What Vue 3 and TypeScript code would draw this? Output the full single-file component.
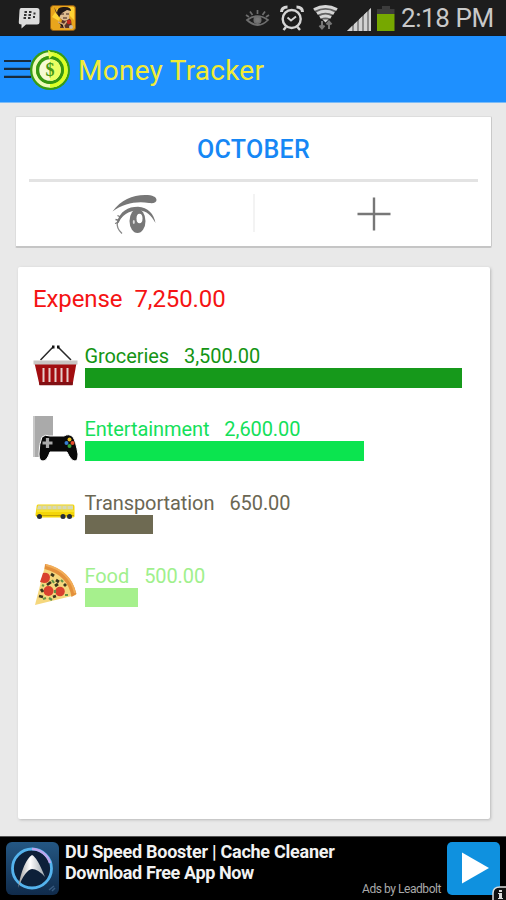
<script setup lang="ts">
interface Category {
  name: string
  amount: string
  icon: 'basket' | 'game' | 'bus' | 'pizza'
  color: string
  bar: string
  width: number
}

const categories: Category[] = [
  { name: 'Groceries', amount: '3,500.00', icon: 'basket', color: '#149414', bar: '#16991b', width: 377 },
  { name: 'Entertainment', amount: '2,600.00', icon: 'game', color: '#14e05a', bar: '#0be44f', width: 279 },
  { name: 'Transportation', amount: '650.00', icon: 'bus', color: '#6b6753', bar: '#6e6a52', width: 68 },
  { name: 'Food', amount: '500.00', icon: 'pizza', color: '#a0f08c', bar: '#a6f08d', width: 53 },
]
</script>

<template>
  <div class="screen">
    <div class="status">
      <svg class="status-left" width="90" height="36" viewBox="0 0 90 36">
        <path d="M21 8h16q2.500 0 2.500 2.500v11.500q0 2.500-2.500 2.500H26l-4.500 4v-4q-3 0-2.700-2.500l.7-11.500Q19.500 8 21 8z" fill="#dcdcdc" />
        <path d="M24.500 12h2.500M24 15h2.500M29 12h2.500M28.500 15h2.500M33.500 13.500h2M23.500 18h2.500M28 18h2.500M33 17h2" stroke="#333" stroke-width="1.900" />
        <rect x="50.500" y="5.500" width="25" height="25" rx="3" fill="#e9a51c" stroke="#8f5b12" />
        <path d="M52 17l6-9 4 5-3 8zM68 7h6v13l-4-4z" fill="#ffd333" />
        <path d="M54 7l2 6 6 7-2 8h12l-1-8-6-5-6 1z" fill="#573429" />
        <path d="M58 11q5-4 12-1l-1 9q-5 4-9-1z" fill="#dfbd91" />
        <path d="M57 13q0-7 8-6 6 0 6 4l-4-1-5 3-3 4z" fill="#211817" />
        <path d="M61 14h3M66 14h3M63 18h4" stroke="#3a211c" stroke-width="1.200" />
        <path d="M58 22l5 2 2 5M67 21l-3 4" stroke="#d0a87c" stroke-width="1.500" />
        <circle cx="69" cy="22" r="2.200" fill="#c3271c" />
        <circle cx="71" cy="27" r="2" fill="#c8bba8" />
      </svg>
      <svg class="status-right" width="156" height="36" viewBox="240 0 156 36">
        <g fill="none" stroke="#6e6e6e" stroke-width="1.700">
          <path d="M247 20q10-8 21 0q-10 10-21 0z" />
          <path d="M257.500 10v4M250 11.500l2.500 3.500M265 11.500l-2.500 3.500M246 15l3 2M269 15l-3 2" />
          <circle cx="257.500" cy="20" r="3.200" fill="#777" />
        </g>
        <g fill="none" stroke="#d5d5d5">
          <circle cx="291.700" cy="19" r="9" stroke-width="2.400" />
          <path d="M287.500 17.500l3.500 3 5-4" stroke-width="1.900" />
          <path d="M281.500 12q0-5 6-5M302.500 12q0-5-6-5" stroke-width="3" />
          <path d="M286 27l-2.500 3M297.500 27l2.500 3" stroke-width="2.500" />
        </g>
        <path d="M313 9q12-7 24.500 0L328 20h-5z" fill="#606060" />
        <g fill="none" stroke="#d5d5d5" stroke-width="3">
          <path d="M314 9.500q11.500-6 23 0M317 13.500q8.500-4.500 17 0M320 17.500q5.500-3 11 0" />
          <path d="M322.500 19.500h6l-3 3z" fill="#d5d5d5" stroke="none" />
        </g>
        <path d="M322 21v7m-2.500-2.500l2.500 3 2.500-3M329 29v-7m-2.500 2.500l2.500-3 2.500 3" stroke="#777" stroke-width="2" fill="none" />
        <path d="M347 31L371 8v23z" fill="#8b8b8b" />
        <path d="M347 31l5-5v5zM354 24.300l3-2.900V31h-3zM359 19.500l3-2.900V31h-3zM364 14.700l3-2.900V31h-3zM369 10l2-2v23h-2z" fill="#d2d2d2" />
        <path d="M377 14V9h5V6h8v3h4.500v5z" fill="#3c3c3c" />
        <path d="M377 14h17.500v17H377z" fill="#76a800" />
      </svg>
      <span class="time">2:18 PM</span>
    </div>

    <header class="appbar">
      <svg width="72" height="48" viewBox="0 0 72 48">
        <path d="M4 17h27M4 24.800h27M4 32.800h27" stroke="#182b3c" stroke-width="2.200" />
        <circle cx="50" cy="26" r="20" fill="#379c13" />
        <circle cx="50" cy="26" r="15.800" fill="none" stroke="#effcb9" stroke-width="3.800" />
        <path d="M50 10.200a15.800 15.800 0 0 1 0 31.600" fill="none" stroke="#dcff24" stroke-width="3.800" />
        <circle cx="50" cy="26" r="14" fill="#37970f" />
        <circle cx="50" cy="26" r="10.800" fill="#f5fad3" />
        <path d="M50 15.200a10.800 10.800 0 0 1 0 21.600z" fill="#eaff62" />
        <path d="M48 6l6 4.200-5 4.800z" fill="#e7ff4a" />
        <text x="50" y="32" class="dollar">$</text>
      </svg>
      <h1>Money Tracker</h1>
    </header>

    <main>
      <section class="month-card">
        <h2>OCTOBER</h2>
        <div class="actions">
          <div class="action view">
            <svg width="46" height="42" viewBox="0 0 46 42">
              <path d="M.5 17.500C9 6 20 1 33 1C41 1 44.500 3 44.500 6C44.500 8.500 42 9.500 37 9C24 7 12 9.500 .5 17.500z" fill="#777" />
              <path d="M4.500 29C8 17 16 12.700 26 12.700C36 13 42 20 43.500 29C39 21 35 17 27 16.500C17 16 10 21 6.500 29z" fill="#777" />
              <path d="M5.500 28Q4 34 10 39.500" stroke="#888" stroke-width="1.300" fill="none" />
              <path d="M3 29.500l3-1M3.500 25.500l4 1M5.500 21.500l4 2" stroke="#777" stroke-width="1.300" />
              <ellipse cx="25.500" cy="27" rx="8" ry="12" fill="#777" />
              <ellipse cx="27.500" cy="24.500" rx="3" ry="4.800" fill="#fff" />
              <ellipse cx="21.800" cy="28" rx="1" ry="2" fill="#ddd" />
            </svg>
          </div>
          <div class="action add">
            <svg width="34" height="34" viewBox="0 0 34 34">
              <path d="M17 .5v33M.5 17h33" stroke="#777" stroke-width="2.400" />
            </svg>
          </div>
        </div>
      </section>

      <section class="expense-card">
        <div class="total"><span>Expense</span><span>7,250.00</span></div>
        <ul>
          <li v-for="c in categories" :key="c.name">
            <svg v-if="c.icon === 'basket'" width="46" height="50" viewBox="0 0 46 50">
              <path d="M7.500 20L20 7M38 20L25 7" stroke="#292929" stroke-width="1.500" />
              <path d="M19 5.500h2.500v3H19zM24 5.500h2.500v3H24z" fill="#111" />
              <path d="M1.500 23h42l-4 22h-33z" fill="#a20d10" />
              <path d="M6 42h34l-.5 3.200h-33z" fill="#811014" />
              <path d="M.5 20.500h44v4H.500z" fill="#c9c5c3" />
              <path d="M10.500 28v14M16.500 28v14M22.500 28v14M28.500 28v14M34.500 28v14" stroke="#e5cdca" stroke-width="2" />
            </svg>
            <svg v-else-if="c.icon === 'game'" width="46" height="50" viewBox="0 0 46 50">
              <path d="M0 3h20v20L6 44H0z" fill="#aaa" />
              <path d="M0 3h2v41H0z" fill="#c8c8c8" />
              <path d="M9 24q3-3 8-1h14q5-3 9 1q3 5 5 17q0 7-3 7q-4 0-8-9H17q-3 9-7 9t-4-7q0-10 3-17z" fill="#090909" stroke="#fff" stroke-width="1" />
              <path d="M14.500 25v10M9.500 30h10" stroke="#aaa" stroke-width="3.200" />
              <circle cx="36.500" cy="26.500" r="2" fill="#e8be26" />
              <circle cx="39.500" cy="30" r="2" fill="#e54b2c" />
              <circle cx="36.500" cy="33" r="2" fill="#36a33b" />
              <circle cx="33.500" cy="30" r="2" fill="#367fd1" />
            </svg>
            <svg v-else-if="c.icon === 'bus'" width="46" height="50" viewBox="0 0 46 50">
              <path d="M5 17.500h35q1.500 0 1.500 2v10q0 1-2 1h-34q-3 0-3-3l1-7q0-3 1.500-3z" fill="#f4d609" />
              <path d="M5 18.500h35v4H4z" fill="#d5d8b7" />
              <path d="M9 18.500v4M14 18.500v4M19 18.500v4M24 18.500v4M29 18.500v4M34 18.500v4" stroke="#eedc59" />
              <path d="M4 24h37" stroke="#fff24a" />
              <path d="M3 28.500h38" stroke="#c7a500" />
              <circle cx="6.500" cy="29.500" r="2.500" fill="#242b3a" />
              <circle cx="30" cy="29.500" r="2.500" fill="#242b3a" />
              <circle cx="36.500" cy="29.500" r="2.500" fill="#242b3a" />
            </svg>
            <svg v-else width="46" height="50" viewBox="0 0 46 50">
              <path d="M12 6L2 45L43 35Q37 13 12 6z" fill="#f5d77d" />
              <path d="M12 4Q38 10 43.500 34L38.500 37Q35 15 11.500 9z" fill="#e3903c" />
              <path d="M13 5Q37 11 42 33" fill="none" stroke="#f2ad58" stroke-width="2" />
              <path d="M10 13q6-1 7 4 0 6-6 6l-4-1z" fill="#d9402e" />
              <circle cx="15.500" cy="31" r="5" fill="#d9402e" />
              <circle cx="27" cy="31.500" r="4.800" fill="#d9402e" />
              <path d="M18 14l3 2M23 20l3 2M14 25l4-3M6 36l4 1M22 26l3-2M8 29l2 3M31 24l2 2M20 37l3-1" stroke="#39351d" stroke-width="2.800" />
              <path d="M19 20l2 3M28 20l2 2M9 25l2 1M22 30v3M10 39l3-1M16 38l3 2M32 35l3 0" stroke="#639447" stroke-width="2.200" />
            </svg>
            <div class="detail">
              <div class="label" :style="{ color: c.color }"><span>{{ c.name }}</span><span>{{ c.amount }}</span></div>
              <div class="bar" :style="{ width: c.width + 'px', background: c.bar }"></div>
            </div>
          </li>
        </ul>
      </section>
    </main>

    <footer class="ad">
      <svg class="ad-logo" width="53" height="53" viewBox="0 0 53 53">
        <defs>
          <linearGradient id="tile" x2="0" y2="1"><stop stop-color="#245783" /><stop offset="1" stop-color="#102b4b" /></linearGradient>
          <linearGradient id="arrow" x2="1"><stop stop-color="#999" /><stop offset=".45" stop-color="#fff" /><stop offset="1" stop-color="#9ba4ab" /></linearGradient>
        </defs>
        <rect width="53" height="53" rx="6" fill="url(#tile)" />
        <circle cx="26" cy="26.500" r="19.500" fill="#0d2039" stroke="#54b3ed" stroke-width="2.800" />
        <path d="M26 7a19.500 19.500 0 0 1 18 14" fill="none" stroke="#bca7ed" stroke-width="2.600" />
        <path d="M26 13Q31 15 39 35Q32 27 26 27Q19 28 12 46Q17 19 26 13z" fill="url(#arrow)" />
        <path d="M43 48l5-4M46 49l3-3" stroke="#385b80" stroke-width="1.500" />
      </svg>
      <div class="ad-copy">
        <div class="ad-line">DU Speed Booster | Cache Cleaner</div>
        <div class="ad-line second">Download Free App Now</div>
        <div class="credit">Ads by Leadbolt</div>
      </div>
      <div class="play">
        <svg width="53" height="53" viewBox="0 0 53 53"><path d="M15 10.500v31L42 26z" fill="#fff" /></svg>
      </div>
      <svg class="info" width="14" height="14" viewBox="0 0 14 14">
        <path d="M1 15V7q0-6 7-6h7v14z" fill="#111" stroke="#ddd" stroke-width="1.500" />
        <path d="M7 4h3v2H7zM6 7h4v5h1v1H6v-1h1V8H6z" fill="#ddd" />
      </svg>
    </footer>
  </div>
</template>

<style>
body { background: #e9e9e9; overflow: hidden; }
</style>

<style scoped>
.screen { width: 506px; height: 900px; display: flex; flex-direction: column; overflow: hidden; background: #e9e9e9; font-family: Roboto, "Liberation Sans", sans-serif; position: relative; }
svg { display: block; flex-shrink: 0; }
h1, h2, ul { margin: 0; padding: 0; font-weight: 400; }
.status { height: 36px; flex-shrink: 0; background: #1d1d1d; display: flex; box-sizing: border-box; border-bottom: 1px solid #151b22; }
.status-right { margin-left: 150px; }
.time { margin-left: 5px; color: #c9c9c9; font-size: 26px; line-height: 36px; letter-spacing: -.4px; white-space: nowrap; }
.appbar { height: 67px; flex-shrink: 0; box-sizing: border-box; padding-top: 8px; background: #1e90ff; border-bottom: 1px solid #7cbcf7; display: flex; }
.appbar h1 { margin-left: 6px; color: #f1eb36; font-size: 28px; line-height: 54px; letter-spacing: .25px; white-space: nowrap; }
.dollar { font: 700 18px "Liberation Serif", serif; fill: #469815; text-anchor: middle; }
main { padding: 13px 14px 0 15px; flex: 1; }
.month-card { width: 477px; height: 132px; box-sizing: border-box; background: #fff; border: 1px solid #ddd; border-right-color: #c9c9c9; border-bottom: 2px solid #c5c5c5; border-radius: 2px; padding: 0 13px; }
.month-card h2 { height: 62px; text-align: center; color: #1687f5; font-size: 25px; line-height: 66px; font-weight: 500; letter-spacing: .3px; }
.actions { height: 67px; display: grid; grid-template-columns: 226px 1fr; border-top: 3px solid #e3e3e3; box-sizing: border-box; }
.action { display: flex; align-items: flex-start; justify-content: center; }
.view { padding-right: 13px; border-right: 2px solid #f3f3f3; height: 38px; margin-top: 12px; box-sizing: border-box; }
.add { padding: 15px 0 0 15px; }
.expense-card { width: 472px; height: 552px; margin: 19px 0 0 3px; background: #fff; box-shadow: 1px 1px 3px #b8b8b8; box-sizing: border-box; padding: 18px 15px; border-radius: 2px; }
.total { display: flex; gap: 12px; color: #f51313; font-size: 24px; line-height: 29px; letter-spacing: -.1px; white-space: nowrap; }
ul { list-style: none; margin-top: 24px; }
li { height: 73.300px; display: flex; }
li > svg { margin-top: 2px; margin-left: -.5px; }
.detail { margin-left: 6px; padding-top: 6px; }
.label { display: flex; gap: 15px; font-size: 20px; line-height: 24px; letter-spacing: -.08px; white-space: nowrap; }
.bar { height: 19.500px; }
.ad { height: 64px; flex-shrink: 0; background: #000; border-top: 1px solid #555; box-sizing: border-box; display: flex; padding: 5px 6px 0; }
.ad-copy { width: 382px; margin: -1px 0 0 6px; color: #f2f2f2; white-space: nowrap; }
.ad-line { font-size: 18px; line-height: 21px; font-weight: 700; letter-spacing: -.25px; }
.second { letter-spacing: -.38px; }
.credit { text-align: right; padding-right: 6px; font-size: 12px; line-height: 13px; letter-spacing: -.45px; color: #aaa; }
.play { width: 53px; height: 53px; border-radius: 5px; background: #0f91df; }
.info { position: absolute; right: 0; bottom: 0; }
</style>
